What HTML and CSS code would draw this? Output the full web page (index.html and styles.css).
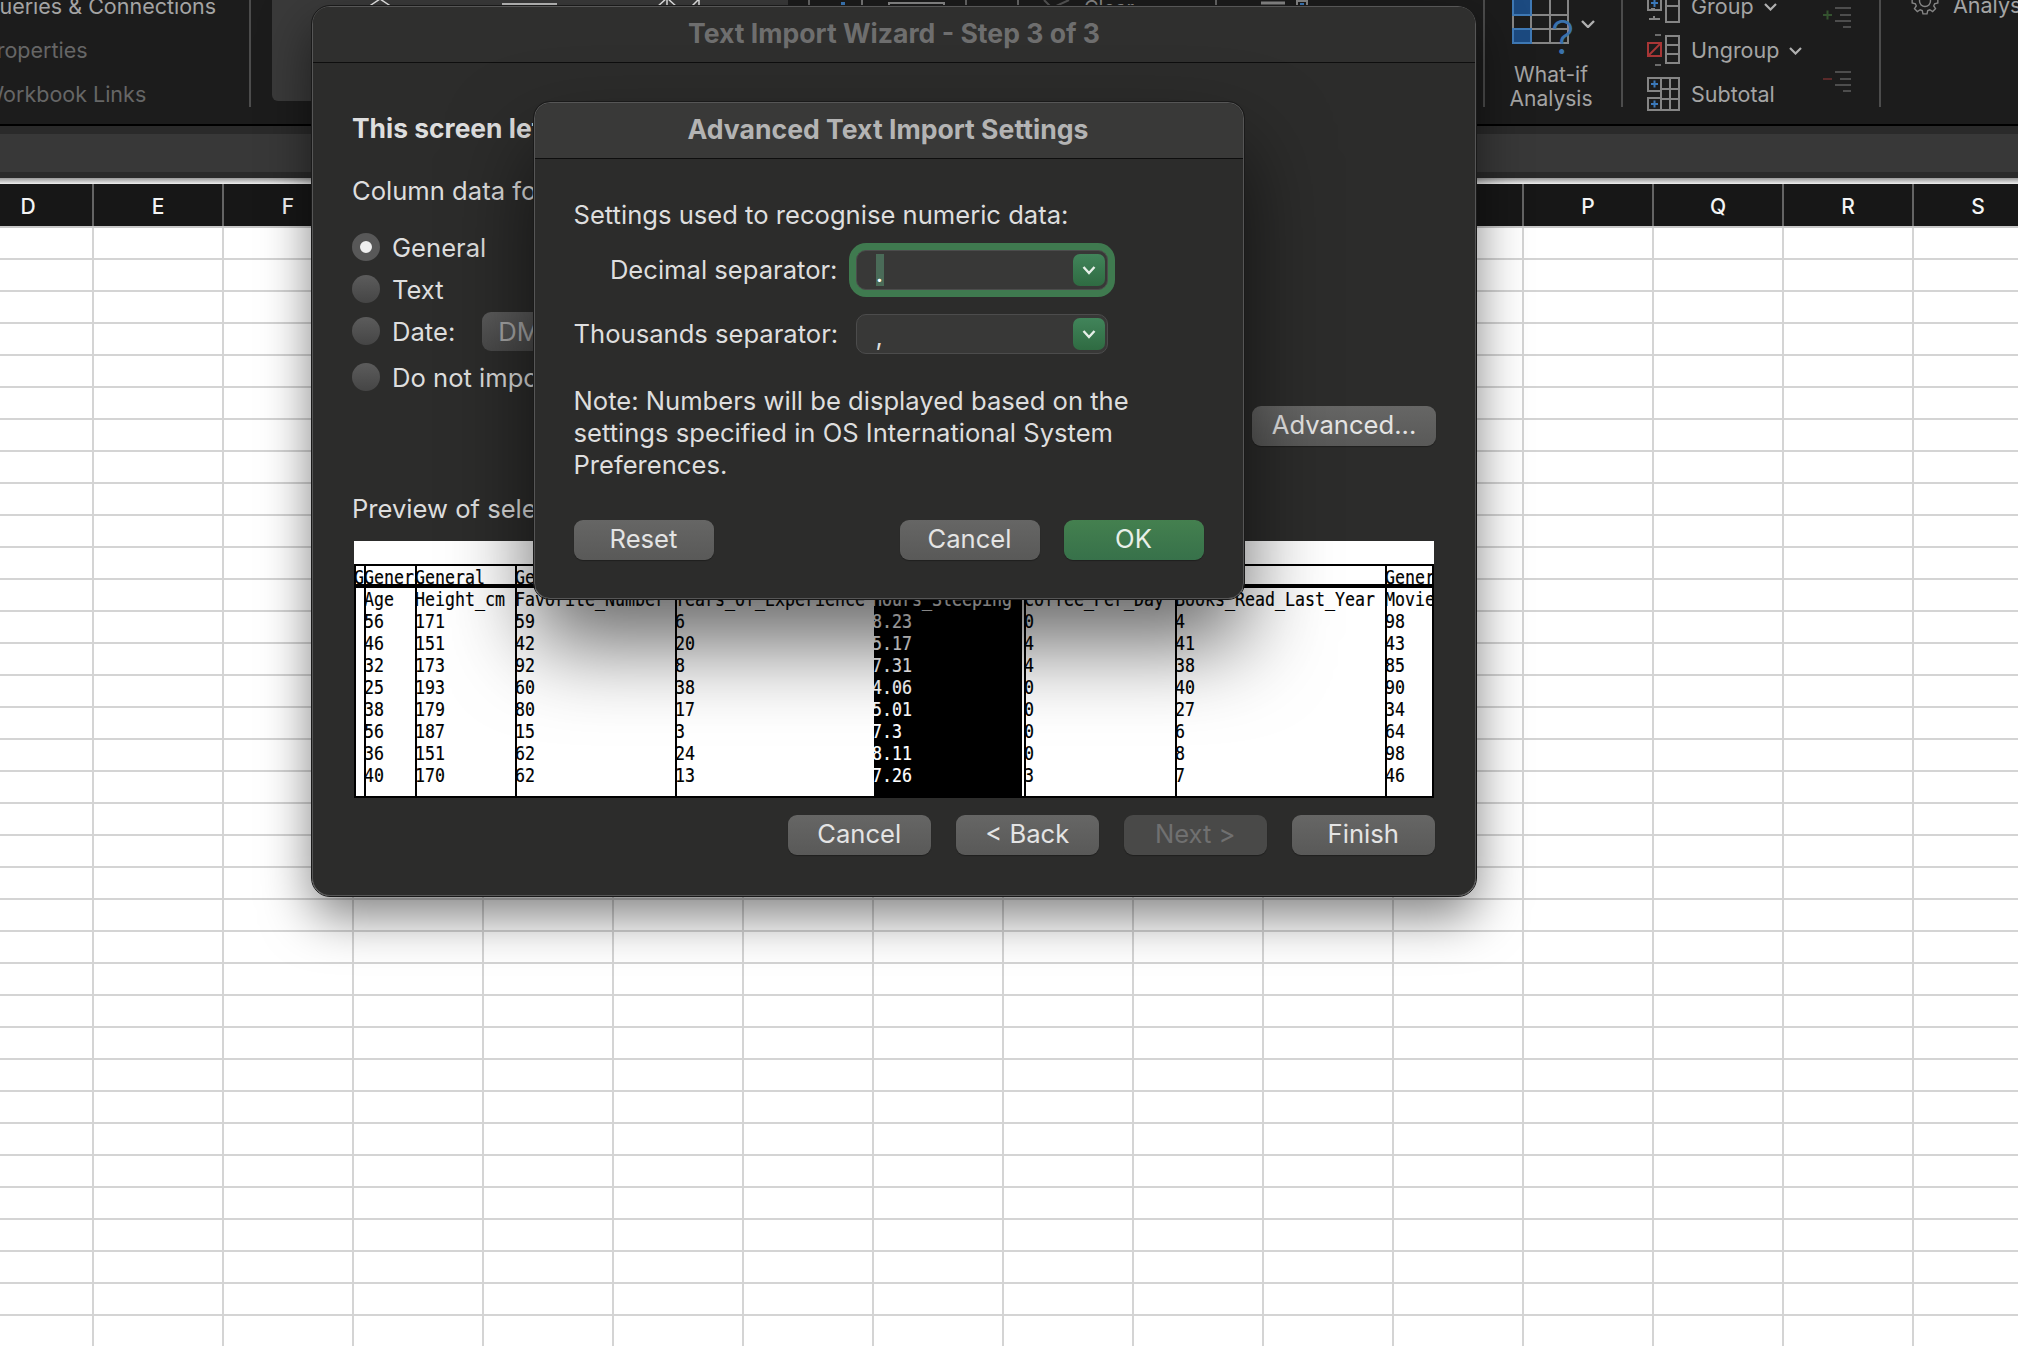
FILE: index.html
```html
<!doctype html>
<html>
<head>
	<meta http-equiv="content-type" content="text/html;charset=utf-8"/>
	<title>Text Import Wizard</title>
	<link rel="stylesheet" href="styles.css">
</head>
<body>
	<div id="app">
		<div class="ribbon">
			<div class="data-links">
				<div class="link-row">Queries &amp; Connections</div>
				<div class="link-row dim">Properties</div>
				<div class="link-row dim">Workbook Links</div>
			</div>
			<div class="gallery">
				<svg width="516" height="8" fill="none" stroke="#e8e8e8" stroke-width="1.5">
					<polyline points="96,7 108,-1 120,7"/>
					<line x1="230" y1="4" x2="285" y2="4"/>
					<polyline points="385,7 395,-2 405,7"/>
					<line x1="395" y1="0" x2="395" y2="7"/>
					<polyline points="419,7 427,-1 427,7"/>
				</svg>
			</div>
			<div class="ribbon-mid">
				<svg width="695" height="8" fill="none" stroke="#666" stroke-width="2">
					<line x1="21" y1="0" x2="21" y2="8"/>
					<line x1="55" y1="2" x2="55" y2="8" stroke="#3b78b8" stroke-width="4"/>
					<line x1="74" y1="0" x2="74" y2="8" stroke="#777"/>
					<polyline points="101,8 101,3 156,3 156,8" stroke="#888"/>
					<line x1="178" y1="0" x2="178" y2="8"/>
					<line x1="230" y1="0" x2="230" y2="8"/>
					<polyline points="256,0 264,8 281,0" stroke="#555"/>
					<text x="296" y="15" class="strip-text">Clear</text>
					<line x1="428" y1="0" x2="428" y2="8"/>
					<line x1="473" y1="3" x2="497" y2="3" stroke="#888" stroke-width="3"/>
					<rect x="509" y="1" width="10" height="7" stroke="#888"/>
					<rect x="512" y="3" width="4" height="3" fill="#3b78b8" stroke="none"/>
				</svg>
			</div>
			<div class="whatif">
				<div class="whatif-icon">
					<svg width="64" height="56" fill="none" stroke="#858585" stroke-width="2">
						<path d="M2 0V43H57V0M20 0V43M39 0V43M2 15H57M2 29H57"/>
						<rect x="2" y="-2" width="18" height="17" fill="#1c4a80" stroke="#3f79b5"/>
						<rect x="2" y="29" width="18" height="14" fill="#1c4a80" stroke="#3f79b5"/>
						<text x="40" y="54" class="whatif-q">?</text>
					</svg>
					<svg class="chev" width="14" height="8" fill="none" stroke="#b0b0b0" stroke-width="2.4"><polyline points="1,1 7,7 13,1"/></svg>
				</div>
				<div class="whatif-label">What-if<br>Analysis</div>
			</div>
			<div class="outline">
				<div class="outline-list">
					<div class="outline-row">
						<svg width="34" height="44" fill="none" stroke="#858585" stroke-width="2">
							<rect x="1" y="-2" width="13" height="27" stroke="#858585"/>
							<path d="M8 24H4M2 34H7V31M7 34H13"/>
							<rect x="19" y="5" width="13" height="32"/>
							<line x1="19" y1="21" x2="32" y2="21"/>
							<path d="M4 18H11M7.5 14V22" stroke="#3b78b8"/>
						</svg>
						<span>Group</span>
						<svg class="chev-small" width="13" height="8" fill="none" stroke="#b0b0b0" stroke-width="2.2"><polyline points="1,1 6.5,6.5 12,1"/></svg>
					</div>
					<div class="outline-row">
						<svg width="34" height="44" fill="none" stroke="#858585" stroke-width="2">
							<rect x="1" y="14" width="13" height="13" stroke="#a83636"/>
							<line x1="1" y1="27" x2="14" y2="14" stroke="#a83636"/>
							<path d="M8 6H14M8 36H14" stroke-width="1.6"/>
							<rect x="19" y="7" width="13" height="27"/>
							<path d="M19 16H32M19 25H32"/>
						</svg>
						<span>Ungroup</span>
						<svg class="chev-small" width="13" height="8" fill="none" stroke="#b0b0b0" stroke-width="2.2"><polyline points="1,1 6.5,6.5 12,1"/></svg>
					</div>
					<div class="outline-row">
						<svg width="34" height="44" fill="none" stroke="#858585" stroke-width="2">
							<path d="M14 5H1V18H14M14 25H1V37H14"/>
							<path d="M4 11H11M7.5 7.500V14.500M4 31H11M7.500 27.500V34.500" stroke="#3b78b8"/>
							<rect x="14" y="5" width="18" height="32"/>
							<path d="M23 5V37M14 16H32M14 26H32"/>
						</svg>
						<span>Subtotal</span>
					</div>
				</div>
				<div class="outline-marks">
					<svg width="30" height="32" fill="none" stroke="#4d4d4d" stroke-width="2">
						<path d="M13 8H29M18 15H29M13 21H29M21 27H29"/>
						<path d="M1 15H10M5.500 10.500V19.500" stroke="#34532f"/>
					</svg>
					<svg width="30" height="32" fill="none" stroke="#4d4d4d" stroke-width="2">
						<path d="M13 8H29M18 15H29M13 21H29M21 27H29"/>
						<path d="M1 15H10" stroke="#5a2a2a"/>
					</svg>
				</div>
			</div>
			<div class="analyse">
				<svg width="30" height="24" viewBox="0 0 30 24" fill="none" stroke="#858585" stroke-width="1.400">
					<g transform="translate(15,9)">
						<path d="M9.61 -2.76L12.84 -2.03L12.84 2.03L9.61 2.76L8.75 4.85L10.52 7.64L7.64 10.52L4.85 8.75L2.76 9.61L2.03 12.84L-2.03 12.84L-2.76 9.61L-4.85 8.75L-7.64 10.52L-10.52 7.64L-8.75 4.85L-9.61 2.76L-12.84 2.03L-12.84 -2.03L-9.61 -2.76L-8.75 -4.85L-10.52 -7.64L-7.64 -10.52L-4.85 -8.75L-2.76 -9.61L-2.03 -12.84L2.03 -12.84L2.76 -9.61L4.85 -8.75L7.64 -10.52L10.52 -7.64L8.75 -4.85Z"/>
						<circle r="5.500"/>
					</g>
				</svg>
				<span>Analyse Data</span>
			</div>
		</div>

		<div class="formula-wrap"><div class="formula-bar"></div></div>
		<div class="sheet-edge"></div>

		<div class="col-heads">
			<div class="col-head">D</div><div class="col-head">E</div><div class="col-head">F</div><div class="col-head">G</div>
			<div class="col-head">H</div><div class="col-head">I</div><div class="col-head">J</div><div class="col-head">K</div>
			<div class="col-head">L</div><div class="col-head">M</div><div class="col-head">N</div><div class="col-head">O</div>
			<div class="col-head">P</div><div class="col-head">Q</div><div class="col-head">R</div><div class="col-head">S</div>
		</div>
		<div class="grid"></div>
	</div>

	<!-- wizard sheet -->
	<div class="dialog wizard">
		<div class="title title-off">Text Import Wizard - Step 3 of 3</div>
		<div class="wizard-body">
			<div class="lead">This screen lets you select each column and set the Data Format.</div>
			<div class="col-format">Column data format</div>
			<div class="radios">
				<div class="radio-row"><span class="radio on"></span>General</div>
				<div class="radio-row"><span class="radio"></span>Text</div>
				<div class="radio-row"><span class="radio"></span>Date:<span class="date-pop">DMY</span></div>
				<div class="radio-row last"><span class="radio"></span>Do not import column (skip)</div>
			</div>
			<div class="adv-row"><div class="btn btn-adv">Advanced...</div></div>
			<div class="preview-label">Preview of selected data</div>

			<div class="preview">
				<div class="preview-top"></div>
				<div class="preview-cols">
					<div class="pcol c0"><div class="phead"><pre>General</pre></div><div class="pdata"><pre></pre></div></div>
					<div class="pcol c1"><div class="phead"><pre>General</pre></div><div class="pdata"><pre>Age
56
46
32
25
38
56
36
40</pre></div></div>
					<div class="pcol c2"><div class="phead"><pre>General</pre></div><div class="pdata"><pre>Height_cm
171
151
173
193
179
187
151
170</pre></div></div>
					<div class="pcol c3"><div class="phead"><pre>General</pre></div><div class="pdata"><pre>Favorite_Number
59
42
92
60
80
15
62
62</pre></div></div>
					<div class="pcol c4"><div class="phead"><pre>General</pre></div><div class="pdata"><pre>Years_of_Experience
6
20
8
38
17
3
24
13</pre></div></div>
					<div class="pcol c5 selected"><div class="phead"><pre>General</pre></div><div class="pdata"><pre>Hours_Sleeping
8.23
5.17
7.31
4.06
5.01
7.3
8.11
7.26</pre></div></div>
					<div class="pcol c6"><div class="phead"><pre>General</pre></div><div class="pdata"><pre>Coffee_Per_Day
0
4
4
0
0
0
0
3</pre></div></div>
					<div class="pcol c7"><div class="phead"><pre>General</pre></div><div class="pdata"><pre>Books_Read_Last_Year
4
41
38
40
27
6
8
7</pre></div></div>
					<div class="pcol c8"><div class="phead"><pre>General</pre></div><div class="pdata"><pre>Movies_Watched
98
43
85
90
34
64
98
46</pre></div></div>
				</div>
			</div>

			<div class="wizard-btns">
				<div class="btn btn-wide">Cancel</div>
				<div class="btn btn-wide">&lt; Back</div>
				<div class="btn btn-wide btn-off">Next &gt;</div>
				<div class="btn btn-wide">Finish</div>
			</div>
		</div>
	</div>

	<!-- settings dialog, on top of the wizard -->
	<div class="dialog settings">
		<div class="title">Advanced Text Import Settings</div>
		<div class="settings-body">
			<div class="settings-intro">Settings used to recognise numeric data:</div>
			<div class="sep-grid">
				<label>Decimal separator:</label>
				<div class="combo focused">
					<span class="combo-val"><span class="combo-sel">.</span></span>
					<span class="combo-btn"><svg width="14" height="9" fill="none" stroke="#e6efe8" stroke-width="2.400"><polyline points="1.500,1 7,7 12.500,1"/></svg></span>
				</div>
				<label>Thousands separator:</label>
				<div class="combo">
					<span class="combo-val"><span class="combo-plain">,</span></span>
					<span class="combo-btn"><svg width="14" height="9" fill="none" stroke="#e6efe8" stroke-width="2.400"><polyline points="1.500,1 7,7 12.500,1"/></svg></span>
				</div>
			</div>
			<div class="note">Note: Numbers will be displayed based on the<br>settings specified in OS International System<br>Preferences.</div>
			<div class="settings-btns">
				<div class="btn btn-std">Reset</div>
				<div class="spacer"></div>
				<div class="btn btn-std">Cancel</div>
				<div class="btn btn-std btn-ok">OK</div>
			</div>
		</div>
	</div>
</body>
</html>
```

FILE: styles.css
```css
html, body {
    margin: 0;
    padding: 0;
}
body {
    width: 2018px;
    height: 1346px;
    overflow: hidden;
    background: #fff;
    font-family: Inter, "Noto Sans", sans-serif;
    color: #dedede;
}

/* ribbon */
.ribbon {
    display: flex;
    height: 124px;
    overflow: hidden;
    background: #1c1c1c;
    border-bottom: 2px solid #000;
    color: #a4a4a4;
    font-size: 21.500px;
}
.data-links {
    flex: 0 0 251px;
    height: 107px;
    box-sizing: border-box;
    border-right: 2px solid #4c4c4c;
    padding-top: 0;
    overflow: hidden;
}
.link-row {
    height: 44px;
    line-height: 42px;
    white-space: nowrap;
    margin-left: -17px;
    position: relative;
    top: -15px;
}
.link-row.dim {
    color: #666;
}
.gallery {
    flex: 0 0 516px;
    height: 101px;
    margin-left: 21px;
    background: #3a3a3a;
    border-radius: 0 0 0 6px;
}
.ribbon-mid {
    flex: 0 0 695px;
}
svg {
    display: block;
}
.strip-text {
    font-size: 20px;
    fill: #888;
    stroke: none;
}
.whatif {
    flex: 0 0 138px;
    box-sizing: border-box;
    height: 107px;
    border-left: 2px solid #4c4c4c;
    text-align: center;
}
.whatif-icon {
    display: flex;
    height: 60px;
    padding-left: 26px;
}
.whatif-icon .chev {
    margin: 20px 0 0 6px;
}
.whatif-q {
    font-size: 47px;
    font-weight: 300;
    fill: #3a72ad;
    stroke: none;
}
.whatif-label {
    line-height: 24px;
    margin: 3px 4px 0 0;
    font-size: 21px;
    color: #a4a4a4;
}
.outline {
    display: flex;
    flex: 0 0 260px;
    box-sizing: border-box;
    height: 107px;
    border-left: 2px solid #4c4c4c;
    border-right: 2px solid #4c4c4c;
}
.outline-list {
    width: 198px;
    margin-top: -15px;
    padding-left: 24px;
    box-sizing: border-box;
}
.outline-row {
    display: flex;
    align-items: center;
    height: 44px;
    white-space: nowrap;
}
.outline-row span {
    margin-left: 10px;
    margin-bottom: 2px;
}
.outline-row .chev-small {
    margin-left: 10px;
}
.outline-marks {
    margin-left: 1px;
}
.outline-marks svg + svg {
    margin-top: 32px;
}
.analyse {
    display: flex;
    align-items: flex-start;
    margin-top: -8px;
    padding-left: 29px;
    white-space: nowrap;
}
.analyse span {
    margin-left: 13px;
}

/* formula bar and column heads */
.formula-wrap {
    background: #2a2a2a;
    padding: 8px 0 6px;
}
.formula-bar {
    height: 38px;
    background: #383838;
}
.sheet-edge {
    height: 6px;
    background: linear-gradient(#999, #eee);
}
.col-heads {
    display: flex;
    height: 42px;
    margin-left: -36px;
    background: #171717;
    border-bottom: 2px solid #c9c9c9;
}
.col-head {
    flex: 0 0 130px;
    box-sizing: border-box;
    border-right: 2px solid #646464;
    text-align: center;
    line-height: 45px;
    font-size: 21px;
    font-weight: 500;
    color: #f4f4f4;
}
.grid {
    height: 1118px;
    background-color: #fff;
    background-image:
        linear-gradient(to right, transparent 92px, #d4d4d4 92px, #d4d4d4 94px, transparent 94px),
        linear-gradient(to bottom, transparent 30px, #d4d4d4 30px, #d4d4d4 32px, transparent 32px);
    background-size: 130px 32px;
}

/* dialogs */
.dialog {
    position: absolute;
    box-sizing: border-box;
    background: #2c2c2b;
    border: 1.500px solid #565656;
    outline: 1px solid #1a1a1a;
}
.wizard {
    left: 312px;
    top: 6px;
    width: 1164px;
    height: 890px;
    border-radius: 18px;
    box-shadow: 0 20px 50px rgba(0, 0, 0, .5);
}
.settings {
    left: 534px;
    top: 102px;
    width: 710px;
    height: 497px;
    border-radius: 16px;
    box-shadow: 0 45px 85px rgba(0, 0, 0, .6);
}
.title {
    height: 55px;
    line-height: 52px;
    text-align: center;
    font-size: 26.600px;
    font-weight: 700;
    color: #b4b4b4;
    background: #393938;
    border-bottom: 1px solid #0e0e0e;
    border-radius: 16px 16px 0 0;
}
.settings .title {
    padding-right: 2px;
}
.title-off {
    color: #6e6e6e;
    background: #2f2f2e;
}
.wizard-body {
    padding: 50px 39px 0 39px;
    font-size: 25.600px;
}
.lead {
    height: 32px;
    line-height: 31px;
    font-size: 26.400px;
    font-weight: 700;
    white-space: nowrap;
}
.col-format {
    margin-top: 30px;
    height: 32px;
    line-height: 32px;
}
.radios {
    margin-top: 26px;
}
.radio-row {
    display: flex;
    align-items: center;
    height: 28px;
    margin-bottom: 14px;
    white-space: nowrap;
}
.radio-row.last {
    margin-top: 18px;
    margin-bottom: 0;
}
.radio {
    flex: 0 0 28px;
    height: 28px;
    margin-right: 12px;
    border-radius: 50%;
    background: linear-gradient(#5c5c5c, #454545);
    box-sizing: border-box;
}
.radio.on {
    border: 8px solid #585858;
    background: #efefef;
}
.date-pop {
    width: 160px;
    height: 39px;
    line-height: 39px;
    margin-left: 27px;
    padding-left: 16px;
    border-radius: 9px;
    background: linear-gradient(#5c5c5c, #4a4a4a);
    color: #a8a8a8;
    box-sizing: border-box;
}
.adv-row {
    display: flex;
    justify-content: flex-end;
    margin-top: 15px;
}
.preview-label {
    margin-top: 47px;
    height: 32px;
    line-height: 31px;
}

/* preview table */
.preview {
    width: 1080px;
    height: 257px;
    margin-top: 16px;
    margin-left: 2px;
    background: #fff;
    color: #000;
}
.preview-top {
    height: 23px;
}
.preview-cols {
    display: flex;
    height: 234px;
    box-sizing: border-box;
    border: 2px solid #000;
    border-right-width: 2px;
}
.pcol {
    flex: 0 0 auto;
    box-sizing: border-box;
    overflow: hidden;
    border-left: 2px solid #000;
}
.c0 { width: 8px; border-left: 0; }
.c1 { width: 51px; }
.c2 { width: 100px; }
.c3 { width: 160px; }
.c4 { width: 199px; }
.c5 { width: 150px; border-left: 0; }
.c6 { width: 151px; }
.c7 { width: 210px; }
.c8 { width: 47px; }
.phead {
    height: 18px;
    overflow: hidden;
    border-bottom: 4px solid #000;
}
.pdata {
    height: 208px;
    padding-top: 0;
    box-sizing: border-box;
}
.selected .pdata {
    background: #000;
    color: #fff;
    margin-right: 2px;
}
pre {
    margin: 0 0 0 -2px;
    font-family: "DejaVu Sans Mono", monospace;
    font-size: 20px;
    line-height: 22px;
    -webkit-text-stroke: .2px currentColor;
    transform: scaleX(.83);
    transform-origin: left top;
}

/* buttons */
.btn {
    height: 40px;
    line-height: 38px;
    box-sizing: border-box;
    text-align: center;
    border-radius: 9px;
    background: linear-gradient(#666665, #595958);
    box-shadow: 0 1px 1px rgba(0, 0, 0, .3);
    color: #e4e4e4;
    font-size: 25.600px;
}
.btn-adv {
    width: 184px;
}
.btn-wide {
    width: 143.500px;
}
.btn-std {
    width: 140px;
}
.btn-off {
    background: #494948;
    color: #707070;
}
.btn-ok {
    background: linear-gradient(#44804f, #37714a);
    color: #e8efe8;
}
.wizard-btns {
    display: flex;
    justify-content: flex-end;
    gap: 24.500px;
    margin: 17px 1px 0 0;
}

/* settings dialog */
.settings-body {
    padding: 40px 39.500px 0 38.500px;
    font-size: 25.600px;
}
.settings-intro {
    height: 32px;
    line-height: 32px;
    white-space: nowrap;
}
.sep-grid {
    display: grid;
    grid-template-columns: 264px 252px;
    column-gap: 18px;
    row-gap: 24px;
    margin-top: 19px;
}
.sep-grid label {
    text-align: right;
    line-height: 40px;
    white-space: nowrap;
}
.combo {
    display: flex;
    justify-content: space-between;
    align-items: center;
    height: 40px;
    box-sizing: border-box;
    padding: 0 2px 0 19px;
    border-radius: 10px;
    background: #383837;
    border: 1px solid #4c4c4c;
}
.combo.focused {
    box-shadow: 0 0 0 7px #3f7a4f;
}
.combo-val {
    display: block;
    line-height: 32px;
}
.combo-sel {
    display: block;
    width: 8px;
    height: 32px;
    line-height: 38px;
    background: #4a6b58;
    color: #fff;
    text-align: center;
}
.combo-plain {
    display: block;
    height: 32px;
    line-height: 38px;
}
.combo-btn {
    display: flex;
    align-items: center;
    justify-content: center;
    width: 32px;
    height: 32px;
    border-radius: 7px;
    background: linear-gradient(#41845a, #2f6b42);
}
.note {
    margin-top: 31px;
    line-height: 32px;
    white-space: nowrap;
}
.settings-btns {
    display: flex;
    gap: 24px;
    margin-top: 39px;
}
.spacer {
    flex: 1;
}
```
